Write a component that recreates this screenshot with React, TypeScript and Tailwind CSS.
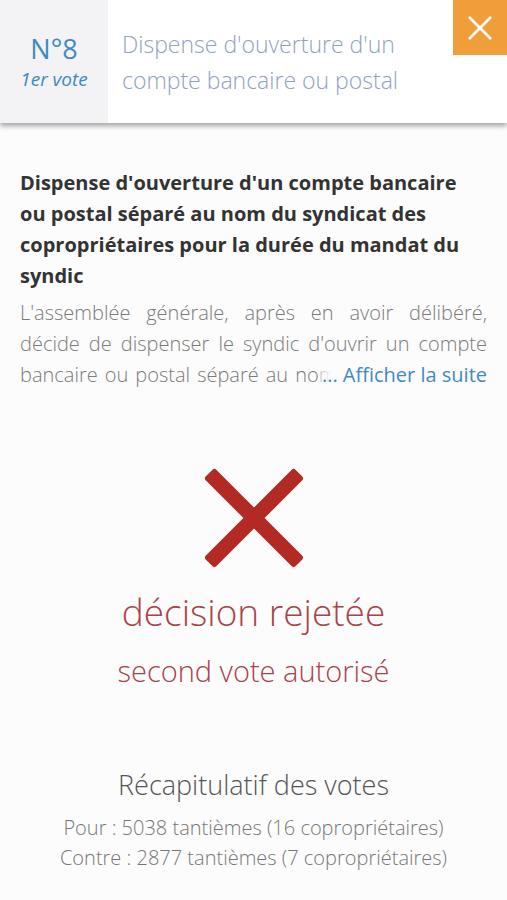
import React from 'react';

const paragraph =
  "L'assemblée générale, après en avoir délibéré, décide de dispenser le syndic d'ouvrir un compte bancaire ou postal séparé au nom du syndicat des copropriétaires pour la durée du mandat du syndic.";

const App: React.FC = () => {
  return (
    <div
      className="min-h-[900px] bg-[#fcfcfc] text-[#555]"
      style={{ fontFamily: '"Open Sans", "Liberation Sans", sans-serif' }}
    >
      {/* Header */}
      <div className="relative flex h-[123px] bg-white shadow-[0_3px_5px_rgba(0,0,0,0.35)]">
        <div className="flex w-[108px] flex-col items-center justify-center bg-[#f3f2f4]">
          <div className="text-[27px] leading-[34px] text-[#3f8ac4]">N°8</div>
          <div className="text-[19px] italic leading-[26px] text-[#3f8ac4]">1er vote</div>
        </div>
        <div className="flex flex-col justify-center pl-[14px] pr-[60px] text-[23px] font-light leading-[36px] text-[#8fa2c2]">
          <div>Dispense d'ouverture d'un</div>
          <div>compte bancaire ou postal</div>
        </div>
        <button className="absolute right-0 top-0 flex h-[55px] w-[54px] items-center justify-center bg-[#f09e3a]">
          <svg width="26" height="26" viewBox="0 0 26 26">
            <path d="M2 2 L24 24 M24 2 L2 24" stroke="white" strokeWidth="2.5" />
          </svg>
        </button>
      </div>

      {/* Resolution text */}
      <div className="px-[20px] pt-[44px]">
        <h2 className="text-[20px] font-bold leading-[31px] text-[#333]">
          Dispense d'ouverture d'un compte bancaire ou postal séparé au nom du syndicat des copropriétaires pour la durée du mandat du syndic
        </h2>
        <div className="relative mt-[6px]">
          <p className="line-clamp-3 text-justify text-[20px] font-light leading-[31px] text-[#7a7a7a]">{paragraph}</p>
          <span className="absolute bottom-0 right-0 bg-[linear-gradient(to_right,rgba(252,252,252,0.5),#fcfcfc_12px)] pl-[2px] text-[20px] leading-[31px] text-[#3f8ac4]">
            ... Afficher la suite
          </span>
        </div>
      </div>

      {/* Decision */}
      <div className="flex flex-col items-center pt-[76px]">
        <svg width="104" height="104" viewBox="0 0 104 104">
          <rect x="-11.5" y="44.5" width="127" height="15" rx="3" fill="#b32a24" transform="rotate(45 52 52)" />
          <rect x="-11.5" y="44.5" width="127" height="15" rx="3" fill="#b32a24" transform="rotate(-45 52 52)" />
        </svg>
        <div className="mt-[20px] text-[37px] font-light leading-[44px] text-[#a8434b]">décision rejetée</div>
        <div className="mt-[19px] text-[29px] font-light leading-[36px] text-[#a8434b]">second vote autorisé</div>

        <div className="mt-[79px] text-[27px] font-light leading-[34px] text-[#555]">Récapitulatif des votes</div>
        <div className="mt-[11px] text-center text-[20px] font-light leading-[30px] text-[#777]">
          <div>Pour : 5038 tantièmes (16 copropriétaires)</div>
          <div>Contre : 2877 tantièmes (7 copropriétaires)</div>
        </div>
      </div>
    </div>
  );
};

export default App;
